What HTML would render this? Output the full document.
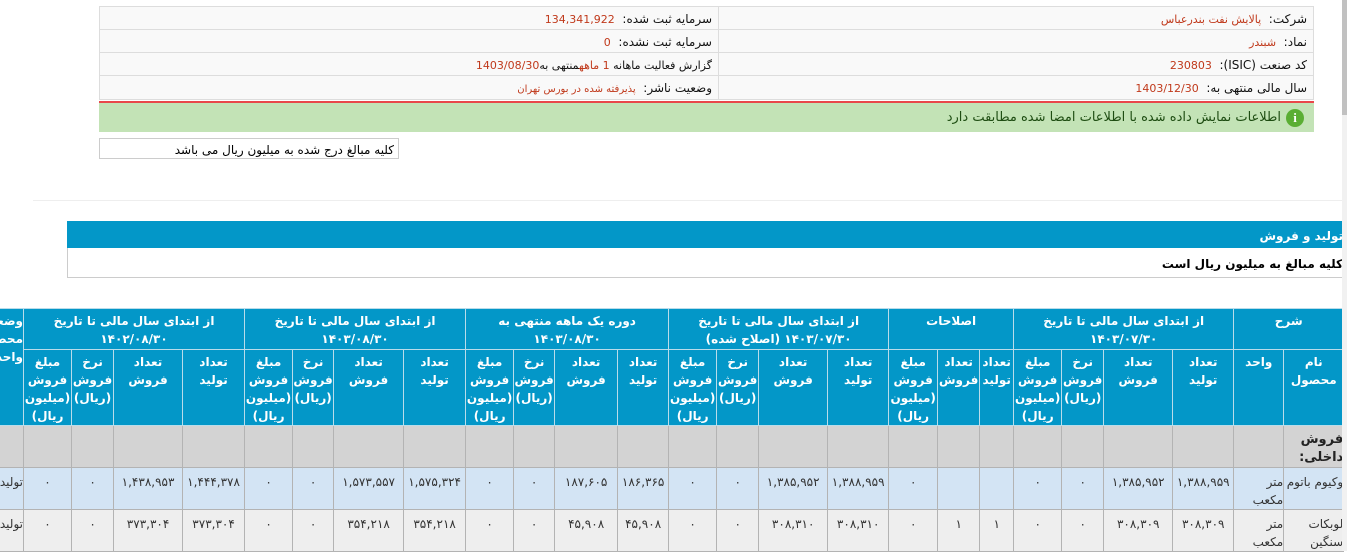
<!DOCTYPE html>
<html><head><meta charset="utf-8"><style>
*{box-sizing:border-box;margin:0;padding:0}
body{width:1347px;height:551px;overflow:hidden;background:#fff;font-family:"DejaVu Sans","Liberation Sans",sans-serif;position:relative}
.abs{position:absolute}
.info{left:99px;top:6px;width:1215px;height:94px;background:#f9f9f9;border:1px solid #ddd}
.info .r{position:absolute;height:23px;border-bottom:1px solid #ddd;direction:rtl;font-size:12px;line-height:25px;padding-right:6px;color:#111;white-space:nowrap}
.v{color:#c0391b;font-size:11px}
.grn{left:99px;top:101px;width:1215px;height:31px;background:#c3e3b6;border-top:2px solid #e9474a;direction:rtl;font-size:13px;line-height:29px;color:#1e4d12;padding-right:10px}
.ic{display:inline-block;width:18px;height:18px;border-radius:50%;background:#5aae33;color:#fff;font-size:13px;line-height:18px;text-align:center;vertical-align:middle;margin-left:5px;font-weight:bold;font-family:"Liberation Serif",serif}
table{position:absolute;top:308px;left:-37px;border-collapse:collapse;table-layout:fixed;direction:rtl;width:1380px}
td,th{border:1px solid #b3b3b3;font-size:12px;overflow:hidden}
th{background:#0397c8;color:#fff;font-weight:bold;vertical-align:top;text-align:center;line-height:18px;padding-top:3px;border-color:#b9dcea;white-space:nowrap}
td{height:42px;vertical-align:top;text-align:center;padding-top:5px;color:#333;line-height:18px;white-space:nowrap}
tr.g,tr.b,tr.e{height:42px}
.g td{background:#d3d3d3}
.b td{background:#d3e4f4}
.e td{background:#eeeeee}
</style></head><body>
<div class="abs info">
 <div class="r" style="right:0;width:595px;top:0">شرکت: &nbsp;<span class="v">پالایش نفت بندرعباس</span></div>
 <div class="r" style="right:0;width:595px;top:23px">نماد: &nbsp;<span class="v">شبندر</span></div>
 <div class="r" style="right:0;width:595px;top:46px">کد صنعت (ISIC): &nbsp;<span class="v">230803</span></div>
 <div class="r" style="right:0;width:595px;top:69px;border-bottom:none">سال مالی منتهی به: &nbsp;<span class="v">1403/12/30</span></div>
 <div class="abs" style="left:618px;top:0;width:1px;height:92px;background:#ddd"></div>
 <div class="r" style="left:0;width:618px;top:0">سرمایه ثبت شده: &nbsp;<span class="v">134,341,922</span></div>
 <div class="r" style="left:0;width:618px;top:23px">سرمایه ثبت نشده: &nbsp;<span class="v">0</span></div>
 <div class="r" style="left:0;width:618px;top:46px;font-size:11px">گزارش فعالیت ماهانه <span class="v">1 ماهه</span>منتهی به<span class="v">1403/08/30</span></div>
 <div class="r" style="left:0;width:618px;top:69px;border-bottom:none">وضعیت ناشر: &nbsp;<span class="v" style="font-size:10px">پذیرفته شده در بورس تهران</span></div>
</div>
<div class="abs grn"><span class="ic">i</span>اطلاعات نمایش داده شده با اطلاعات امضا شده مطابقت دارد</div>
<div class="abs" style="left:99px;top:138px;width:300px;height:21px;border:1px solid #ccc;direction:rtl;font-size:12px;line-height:22px;padding-right:4px">کلیه مبالغ درج شده به میلیون ریال می باشد</div>
<div class="abs" style="left:33px;top:200px;width:1310px;height:1px;background:#eee"></div>
<div class="abs" style="left:67px;top:221px;width:1276px;height:27px;background:#0397c8;color:#fff;direction:rtl;font-size:12px;font-weight:bold;line-height:30px">تولید و فروش</div>
<div class="abs" style="left:67px;top:248px;width:1276px;height:30px;border-bottom:1px solid #ccc;border-left:1px solid #ccc;direction:rtl;font-size:12px;font-weight:bold;line-height:32px;color:#000">کلیه مبالغ به میلیون ریال است</div>
<table>
<colgroup><col style="width:60px"><col style="width:50px"><col style="width:61px"><col style="width:69px"><col style="width:42px"><col style="width:48px"><col style="width:34px"><col style="width:42px"><col style="width:49px"><col style="width:61px"><col style="width:69px"><col style="width:42px"><col style="width:48px"><col style="width:51px"><col style="width:63px"><col style="width:41px"><col style="width:48px"><col style="width:62px"><col style="width:70px"><col style="width:41px"><col style="width:48px"><col style="width:62px"><col style="width:69px"><col style="width:42px"><col style="width:48px"><col style="width:60px"></colgroup>
<tr style="height:41px"><th colspan="2">شرح</th><th colspan="4">از ابتدای سال مالی تا تاریخ<br>۱۴۰۳/۰۷/۳۰</th><th colspan="3">اصلاحات</th><th colspan="4">از ابتدای سال مالی تا تاریخ<br>۱۴۰۳/۰۷/۳۰ (اصلاح شده)</th><th colspan="4">دوره یک ماهه منتهی به<br>۱۴۰۳/۰۸/۳۰</th><th colspan="4">از ابتدای سال مالی تا تاریخ<br>۱۴۰۳/۰۸/۳۰</th><th colspan="4">از ابتدای سال مالی تا تاریخ<br>۱۴۰۲/۰۸/۳۰</th><th rowspan="2" style="text-align:right">وضعیت<br>محصول -<br>واحد</th></tr>
<tr style="height:75px"><th>نام<br>محصول</th><th>واحد</th><th>تعداد<br>تولید</th><th>تعداد<br>فروش</th><th>نرخ<br>فروش<br>(ریال)</th><th>مبلغ<br>فروش<br>(میلیون<br>ریال)</th><th>تعداد<br>تولید</th><th>تعداد<br>فروش</th><th>مبلغ<br>فروش<br>(میلیون<br>ریال)</th><th>تعداد<br>تولید</th><th>تعداد<br>فروش</th><th>نرخ<br>فروش<br>(ریال)</th><th>مبلغ<br>فروش<br>(میلیون<br>ریال)</th><th>تعداد<br>تولید</th><th>تعداد<br>فروش</th><th>نرخ<br>فروش<br>(ریال)</th><th>مبلغ<br>فروش<br>(میلیون<br>ریال)</th><th>تعداد<br>تولید</th><th>تعداد<br>فروش</th><th>نرخ<br>فروش<br>(ریال)</th><th>مبلغ<br>فروش<br>(میلیون<br>ریال)</th><th>تعداد<br>تولید</th><th>تعداد<br>فروش</th><th>نرخ<br>فروش<br>(ریال)</th><th>مبلغ<br>فروش<br>(میلیون<br>ریال)</th></tr>
<tr class="g"><td style="text-align:right;font-weight:bold;font-size:13px;color:#222">فروش<br>داخلی:</td><td></td><td></td><td></td><td></td><td></td><td></td><td></td><td></td><td></td><td></td><td></td><td></td><td></td><td></td><td></td><td></td><td></td><td></td><td></td><td></td><td></td><td></td><td></td><td></td><td></td></tr>
<tr class="b"><td style="text-align:right">وکیوم باتوم</td><td style="text-align:right">متر<br>مکعب</td><td>۱,۳۸۸,۹۵۹</td><td>۱,۳۸۵,۹۵۲</td><td>۰</td><td>۰</td><td></td><td></td><td>۰</td><td>۱,۳۸۸,۹۵۹</td><td>۱,۳۸۵,۹۵۲</td><td>۰</td><td>۰</td><td>۱۸۶,۳۶۵</td><td>۱۸۷,۶۰۵</td><td>۰</td><td>۰</td><td>۱,۵۷۵,۳۲۴</td><td>۱,۵۷۳,۵۵۷</td><td>۰</td><td>۰</td><td>۱,۴۴۴,۳۷۸</td><td>۱,۴۳۸,۹۵۳</td><td>۰</td><td>۰</td><td style="text-align:right">تولید</td></tr>
<tr class="e"><td style="text-align:right">لوبکات<br>سنگین</td><td style="text-align:right">متر<br>مکعب</td><td>۳۰۸,۳۰۹</td><td>۳۰۸,۳۰۹</td><td>۰</td><td>۰</td><td>۱</td><td>۱</td><td>۰</td><td>۳۰۸,۳۱۰</td><td>۳۰۸,۳۱۰</td><td>۰</td><td>۰</td><td>۴۵,۹۰۸</td><td>۴۵,۹۰۸</td><td>۰</td><td>۰</td><td>۳۵۴,۲۱۸</td><td>۳۵۴,۲۱۸</td><td>۰</td><td>۰</td><td>۳۷۳,۳۰۴</td><td>۳۷۳,۳۰۴</td><td>۰</td><td>۰</td><td style="text-align:right">تولید</td></tr>
</table>
<div class="abs" style="left:1342px;top:0;width:5px;height:551px;background:#f1f1f1"></div>
<div class="abs" style="left:1342px;top:0;width:5px;height:115px;background:#c1c1c1"></div>
</body></html>
